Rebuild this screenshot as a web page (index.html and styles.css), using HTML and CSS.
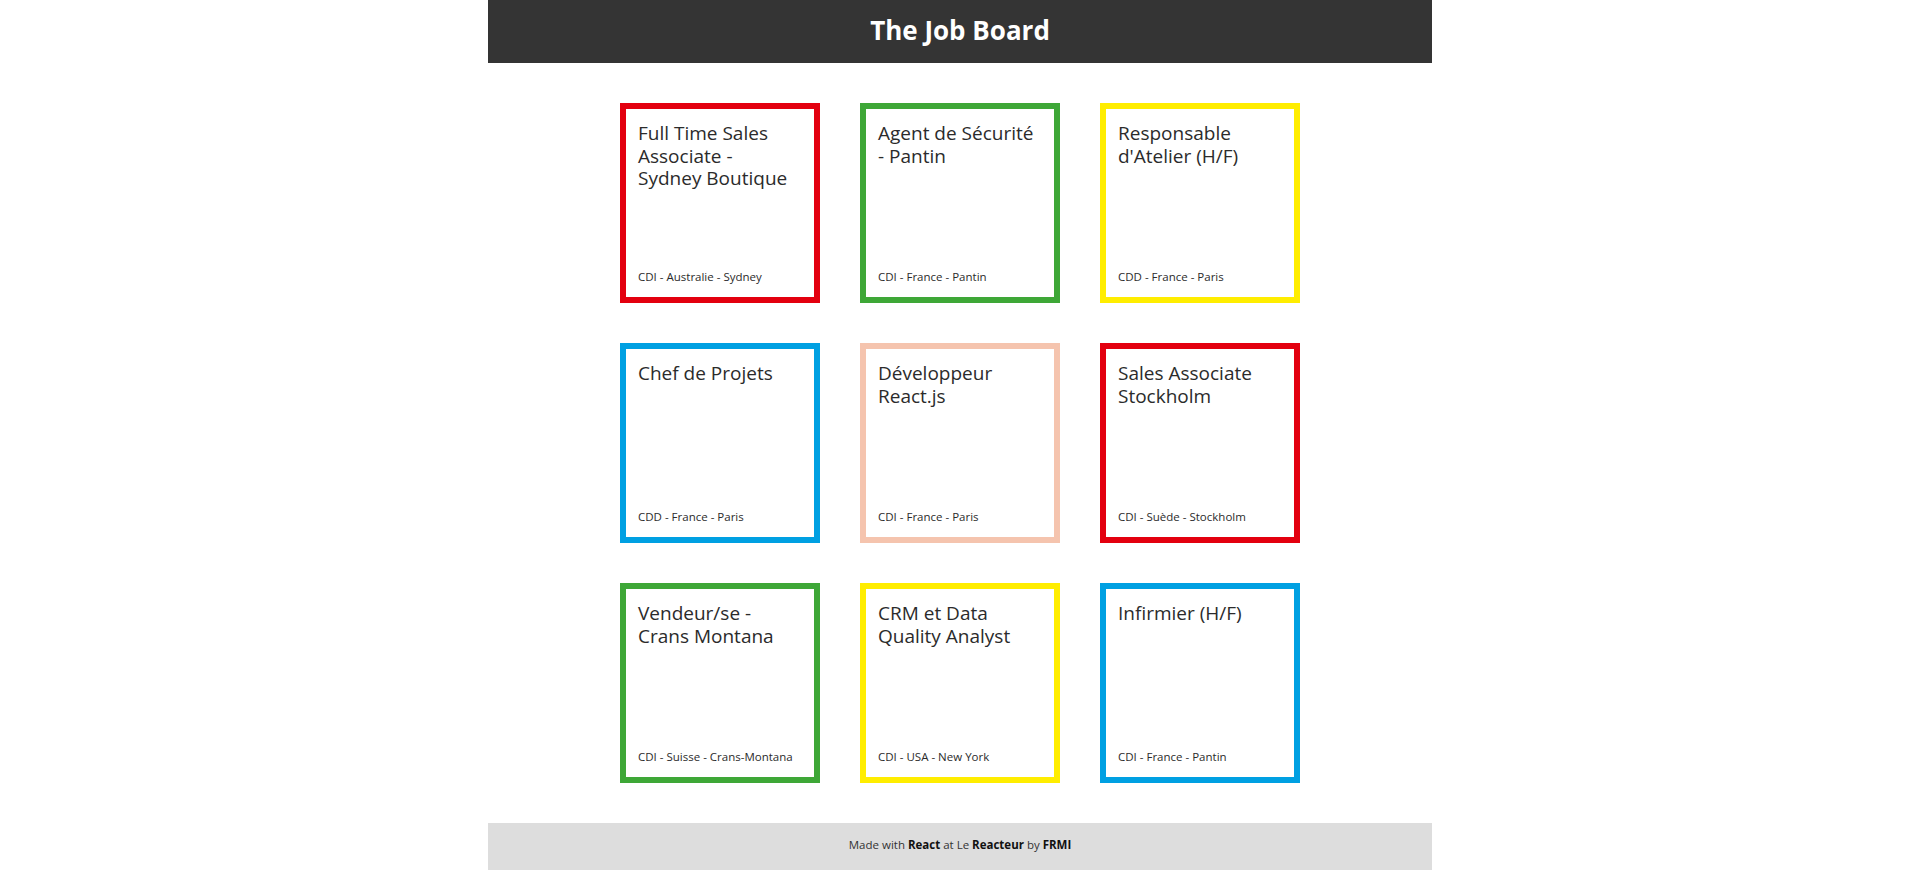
FILE: index.html
```html
<!DOCTYPE html>
<html lang="fr">
<head>
<meta charset="utf-8">
<title>The Job Board</title>
<link rel="stylesheet" href="styles.css">
</head>
<body>
<div class="page">
  <header class="header"><h1 class="brand">The Job Board</h1></header>
  <main class="board">
    <article class="card card-red"><h2 class="card-title">Full Time Sales Associate - Sydney Boutique</h2><p class="card-meta">CDI - Australie - Sydney</p></article>
    <article class="card card-green"><h2 class="card-title">Agent de Sécurité - Pantin</h2><p class="card-meta">CDI - France - Pantin</p></article>
    <article class="card card-yellow"><h2 class="card-title">Responsable d'Atelier (H/F)</h2><p class="card-meta">CDD - France - Paris</p></article>
    <article class="card card-blue"><h2 class="card-title">Chef de Projets</h2><p class="card-meta">CDD - France - Paris</p></article>
    <article class="card card-peach"><h2 class="card-title">Développeur React.js</h2><p class="card-meta">CDI - France - Paris</p></article>
    <article class="card card-red"><h2 class="card-title">Sales Associate Stockholm</h2><p class="card-meta">CDI - Suède - Stockholm</p></article>
    <article class="card card-green"><h2 class="card-title">Vendeur/se - Crans Montana</h2><p class="card-meta">CDI - Suisse - Crans-Montana</p></article>
    <article class="card card-yellow"><h2 class="card-title">CRM et Data Quality Analyst</h2><p class="card-meta">CDI - USA - New York</p></article>
    <article class="card card-blue"><h2 class="card-title">Infirmier (H/F)</h2><p class="card-meta">CDI - France - Pantin</p></article>
  </main>
  <footer class="footer"><p class="credits">Made with <strong>React</strong> at Le <strong>Reacteur</strong> by <strong>FRMI</strong></p></footer>
</div>
</body>
</html>
```
FILE: styles.css
```css
* { box-sizing: border-box; }
html, body { margin: 0; padding: 0; background: #fff; }
body { font-family: "Open Sans", "Noto Sans", sans-serif; color: #333; }
.page { width: 944px; margin: 0 auto; }
.header {
  height: 63px;
  background: #343434;
  display: flex;
  align-items: center;
  justify-content: center;
  padding-bottom: 4px;
}
.brand { margin: 0; color: #fff; font-size: 26px; font-weight: 700; }
.board {
  display: grid;
  grid-template-columns: repeat(3, 200px);
  gap: 40px;
  justify-content: center;
  padding: 40px 0;
}
.card {
  width: 200px;
  height: 200px;
  border: 6px solid;
  padding: 13px 16px 13px 12px;
  display: flex;
  flex-direction: column;
  justify-content: space-between;
}
.card-title { margin: 0; font-size: 19px; font-weight: 400; line-height: 22.5px; color: #2b2b2b; }
.card-meta { margin: 0; font-size: 11.5px; color: #2b2b2b; white-space: nowrap; }
.card-red { border-color: #e3000f; }
.card-green { border-color: #3ea737; }
.card-yellow { border-color: #ffed00; }
.card-blue { border-color: #00a0e2; }
.card-peach { border-color: #f5c4ae; }
.footer {
  height: 47px;
  background: #ddd;
  display: flex;
  align-items: center;
  justify-content: center;
  padding-bottom: 4px;
}
.credits { margin: 0; font-size: 11.5px; color: #333; }
.credits strong { font-weight: 700; color: #111; }
```
